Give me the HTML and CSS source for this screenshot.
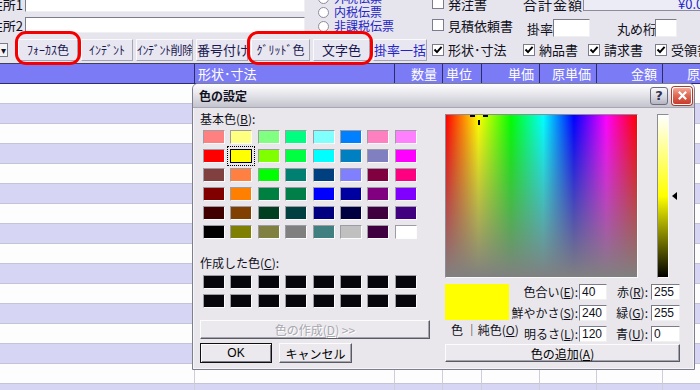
FILE: index.html
```html
<!DOCTYPE html>
<html lang="ja">
<head>
    <meta charset="UTF-8">
    <title>色の設定</title>
    <link rel="stylesheet" href="styles.css">
</head>
<body>
    <!-- Order form header -->
    <div class="top">
        <div class="addr">
            <div class="addr-row"><span class="lbl">住所1</span><span class="field addr-field"></span></div>
            <div class="addr-row"><span class="lbl">住所2</span><span class="field addr-field"></span></div>
        </div>
        <div class="radios">
            <div class="radio"><i></i>外税伝票</div>
            <div class="radio"><i></i>内税伝票</div>
            <div class="radio"><i></i>非課税伝票</div>
        </div>
        <div class="docs">
            <div class="check"><i></i>発注書</div>
            <div class="check"><i></i>見積依頼書</div>
        </div>
        <div class="totals">
            <div class="total-row"><span class="total-lbl">合計金額</span><span class="total">¥0.00</span></div>
            <div class="rate-row">
                <span class="rate-lbl">掛率</span><span class="field rate"></span>
                <span class="round-lbl">丸め桁</span><span class="field round"></span>
            </div>
        </div>
    </div>

    <!-- Toolbar -->
    <div class="toolbar">
        <span class="combo">▾</span>
        <button class="tb tb-focus">ﾌｫｰｶｽ色</button>
        <button class="tb tb-indent">ｲﾝﾃﾞﾝﾄ</button>
        <button class="tb tb-outdent">ｲﾝﾃﾞﾝﾄ削除</button>
        <button class="tb tb-number">番号付け</button>
        <button class="tb tb-grid">ｸﾞﾘｯﾄﾞ色</button>
        <button class="tb tb-text">文字色</button>
        <button class="tb tb-rate">掛率一括</button>
        <div class="tool-checks">
            <div class="check"><i><svg viewBox="0 0 10 10"><path d="M1.5 4.5l2.5 2.6 4.6-5.2"/></svg></i>形状･寸法</div>
            <div class="check"><i><svg viewBox="0 0 10 10"><path d="M1.5 4.5l2.5 2.6 4.6-5.2"/></svg></i>納品書</div>
            <div class="check"><i><svg viewBox="0 0 10 10"><path d="M1.5 4.5l2.5 2.6 4.6-5.2"/></svg></i>請求書</div>
            <div class="check"><i><svg viewBox="0 0 10 10"><path d="M1.5 4.5l2.5 2.6 4.6-5.2"/></svg></i>受領書</div>
        </div>
    </div>

    <!-- Detail grid -->
    <table class="grid">
        <colgroup>
            <col class="c-no"><col class="c-shape"><col class="c-qty"><col class="c-unit">
            <col class="c-price"><col class="c-cost"><col class="c-amount"><col class="c-rest">
        </colgroup>
        <thead>
            <tr><th></th><th class="left">形状･寸法</th><th>数量</th><th class="left">単位</th><th>単価</th><th>原単価</th><th>金額</th><th>原価金額</th></tr>
        </thead>
        <tbody>
            <tr><td></td><td></td><td></td><td></td><td></td><td></td><td></td><td></td></tr>
            <tr><td></td><td></td><td></td><td></td><td></td><td></td><td></td><td></td></tr>
            <tr><td></td><td></td><td></td><td></td><td></td><td></td><td></td><td></td></tr>
            <tr><td></td><td></td><td></td><td></td><td></td><td></td><td></td><td></td></tr>
            <tr><td></td><td></td><td></td><td></td><td></td><td></td><td></td><td></td></tr>
            <tr><td></td><td></td><td></td><td></td><td></td><td></td><td></td><td></td></tr>
            <tr><td></td><td></td><td></td><td></td><td></td><td></td><td></td><td></td></tr>
            <tr><td></td><td></td><td></td><td></td><td></td><td></td><td></td><td></td></tr>
            <tr><td></td><td></td><td></td><td></td><td></td><td></td><td></td><td></td></tr>
            <tr><td></td><td></td><td></td><td></td><td></td><td></td><td></td><td></td></tr>
            <tr><td></td><td></td><td></td><td></td><td></td><td></td><td></td><td></td></tr>
            <tr><td></td><td></td><td></td><td></td><td></td><td></td><td></td><td></td></tr>
            <tr><td></td><td></td><td></td><td></td><td></td><td></td><td></td><td></td></tr>
            <tr><td></td><td></td><td></td><td></td><td></td><td></td><td></td><td></td></tr>
            <tr><td></td><td></td><td></td><td></td><td></td><td></td><td></td><td></td></tr>
            <tr><td></td><td></td><td></td><td></td><td></td><td></td><td></td><td></td></tr>
        </tbody>
    </table>

    <!-- Annotation rings -->
    <div class="mark mark-focus"></div>
    <div class="mark mark-grid"></div>

    <!-- Color dialog -->
    <div class="dialog">
        <div class="title">
            <span class="title-text">色の設定</span>
            <span class="title-btn help">?</span>
            <span class="title-btn close"><svg viewBox="0 0 12 12"><path d="M2 2l8 8M10 2l-8 8"/></svg></span>
        </div>
        <div class="dlg-body">
            <div class="basic">
                <div class="cap">基本色(<u>B</u>):</div>
                <div class="swatches">
                    <span style="background:#ff8080"></span><span style="background:#ffff80"></span><span style="background:#80ff80"></span><span style="background:#00ff80"></span><span style="background:#80ffff"></span><span style="background:#0080ff"></span><span style="background:#ff80c0"></span><span style="background:#ff80ff"></span>
                    <span style="background:#ff0000"></span><span class="sel" style="background:#ffff00"></span><span style="background:#80ff00"></span><span style="background:#00ff40"></span><span style="background:#00ffff"></span><span style="background:#0080c0"></span><span style="background:#8080c0"></span><span style="background:#ff00ff"></span>
                    <span style="background:#804040"></span><span style="background:#ff8040"></span><span style="background:#00ff00"></span><span style="background:#008070"></span><span style="background:#004080"></span><span style="background:#8080ff"></span><span style="background:#800040"></span><span style="background:#ff0080"></span>
                    <span style="background:#800000"></span><span style="background:#ff8000"></span><span style="background:#008040"></span><span style="background:#008048"></span><span style="background:#0000ff"></span><span style="background:#0000a0"></span><span style="background:#800080"></span><span style="background:#8000ff"></span>
                    <span style="background:#400000"></span><span style="background:#804000"></span><span style="background:#004020"></span><span style="background:#004040"></span><span style="background:#000080"></span><span style="background:#000040"></span><span style="background:#400040"></span><span style="background:#400080"></span>
                    <span style="background:#000000"></span><span style="background:#808000"></span><span style="background:#808040"></span><span style="background:#808080"></span><span style="background:#408080"></span><span style="background:#c0c0c0"></span><span style="background:#400040"></span><span style="background:#ffffff"></span>
                </div>
                <div class="cap custom-cap">作成した色(<u>C</u>):</div>
                <div class="swatches custom">
                    <span></span><span></span><span></span><span></span><span></span><span></span><span></span><span></span>
                    <span></span><span></span><span></span><span></span><span></span><span></span><span></span><span></span>
                </div>
                <button class="btn define" disabled>色の作成(<u>D</u>) &gt;&gt;</button>
                <div class="actions">
                    <button class="btn ok">OK</button>
                    <button class="btn cancel">キャンセル</button>
                </div>
            </div>

            <div class="picker">
                <div class="spectrum-row">
                    <div class="spectrum">
                        <span class="cross cross-l"></span>
                        <span class="cross cross-r"></span>
                        <span class="cross cross-v"></span>
                    </div>
                    <div class="lum"></div>
                    <div class="lum-arrow"></div>
                </div>
                <div class="values">
                    <div class="preview-col">
                        <div class="preview"></div>
                        <div class="preview-lbl">色 ｜純色(<u>O</u>)</div>
                    </div>
                    <div class="fields">
                        <span class="f-lbl">色合い(<u>E</u>):</span><span class="field f-in">40</span>
                        <span class="f-lbl f-lbl2">赤(<u>R</u>):</span><span class="field f-in">255</span>
                        <span class="f-lbl">鮮やかさ(<u>S</u>):</span><span class="field f-in">240</span>
                        <span class="f-lbl f-lbl2">緑(<u>G</u>):</span><span class="field f-in">255</span>
                        <span class="f-lbl">明るさ(<u>L</u>):</span><span class="field f-in">120</span>
                        <span class="f-lbl f-lbl2">青(<u>U</u>):</span><span class="field f-in">0</span>
                    </div>
                </div>
                <button class="btn add">色の追加(<u>A</u>)</button>
            </div>
        </div>
    </div>
</body>
</html>
```

FILE: styles.css
```css
body {
    margin: 0;
    width: 700px;
    height: 390px;
    overflow: hidden;
    position: relative;
    background: #e6e4ec;
    color: #101020;
    font-family: "Noto Sans CJK JP", sans-serif;
    font-size: 12px;
    line-height: 1;
}

u {
    text-decoration: underline;
    text-underline-offset: 1px;
}

/* Header form */
.top {
    display: flex;
    height: 36px;
}

.top > div {
    flex: none;
}

.field {
    display: block;
    box-sizing: border-box;
    background: #fff;
    border: 1px solid;
    border-color: #7c7c88 #f0f0f0 #f0f0f0 #7c7c88;
}

.addr {
    width: 312px;
    margin-top: -4px;
    display: flex;
    flex-direction: column;
    gap: 5px;
}

.addr-row {
    display: flex;
    align-items: center;
    height: 16px;
}

.lbl {
    width: 23px;
    margin-right: 2px;
    display: flex;
    justify-content: flex-end;
    overflow: hidden;
    white-space: nowrap;
    font-size: 13px;
}

.addr-field {
    width: 280px;
    height: 16px;
}

.radios {
    width: 112px;
    margin-top: -8px;
    padding-left: 6px;
    display: flex;
    flex-direction: column;
    gap: 2px;
}

.radio {
    display: flex;
    align-items: center;
    gap: 5px;
    height: 12px;
    line-height: 12px;
    color: #2424c8;
    font-size: 12px;
    white-space: nowrap;
}

.radio i {
    flex: none;
    width: 11px;
    height: 11px;
    box-sizing: border-box;
    border-radius: 50%;
    background: #fff;
    border: 1px solid #8c8c9c;
}

.docs {
    width: 88px;
    padding-left: 2px;
    margin-top: -3px;
    display: flex;
    flex-direction: column;
    gap: 10px;
}

.check {
    display: flex;
    align-items: center;
    gap: 4px;
    height: 12px;
    white-space: nowrap;
    font-size: 13px;
}

.check i {
    flex: none;
    width: 12px;
    height: 12px;
    box-sizing: border-box;
    background: #fff;
    border: 1px solid #7c7c8c;
    display: flex;
    align-items: center;
    justify-content: center;
}

.check svg {
    width: 10px;
    height: 10px;
    fill: none;
    stroke: #000;
    stroke-width: 2;
}

.totals {
    width: 180px;
    display: flex;
    flex-direction: column;
}

.total-row {
    display: flex;
    align-items: center;
    height: 15px;
    margin-top: -4px;
}

.total-lbl {
    flex: none;
    width: 60px;
    padding-left: 3px;
    font-size: 14px;
    letter-spacing: 1px;
    white-space: nowrap;
}

.total {
    flex: none;
    width: 140px;
    height: 15px;
    box-sizing: border-box;
    padding-left: 94px;
    background: #ececf6;
    border: 1px solid #8c8c9c;
    color: #2424c8;
    font-size: 13px;
    line-height: 13px;
    white-space: nowrap;
}

.rate-row {
    display: flex;
    align-items: center;
    height: 18px;
    margin-top: 8px;
}

.rate-row > * {
    flex: none;
}

.rate-lbl {
    padding-left: 7px;
    width: 26px;
    font-size: 13px;
    white-space: nowrap;
}

.rate {
    width: 37px;
    height: 18px;
}

.round-lbl {
    margin-left: 27px;
    width: 38px;
    font-size: 13px;
    white-space: nowrap;
}

.round {
    width: 22px;
    height: 18px;
}

/* Toolbar */
.toolbar {
    display: flex;
    align-items: center;
    gap: 3px;
    height: 27px;
}

.toolbar > * {
    flex: none;
}

.combo {
    width: 8px;
    height: 14px;
    margin-right: 7px;
    box-sizing: border-box;
    border: 1px solid #7c7c88;
    border-left: none;
    background: #f4f4f8;
    font-size: 10px;
    line-height: 12px;
    text-align: center;
    overflow: hidden;
}

.tb {
    height: 22px;
    padding: 0;
    box-sizing: border-box;
    background: #e8e6f0;
    border: 1px solid;
    border-color: #fafafa #a4a4b4 #a4a4b4 #fafafa;
    color: #1a1a50;
    font-family: inherit;
    font-size: 12px;
    white-space: nowrap;
    overflow: hidden;
}

.tb-focus { width: 60px; }
.tb-indent { width: 52px; }
.tb-outdent { width: 57px; letter-spacing: -0.5px; }
.tb-number { width: 52px; font-size: 13px; }
.tb-grid { width: 59px; }
.tb-text { width: 57px; font-size: 13px; }
.tb-rate { width: 54px; color: #2424c8; font-size: 13px; }

.tool-checks {
    display: grid;
    grid-template-columns: 91px 65px 67px auto;
    margin-left: 2px;
}

/* Detail grid */
.grid {
    border-collapse: separate;
    border-spacing: 0;
    table-layout: fixed;
    width: 745px;
    border-top: 1px solid #404058;
}

.c-no { width: 195px; }
.c-shape { width: 200px; }
.c-qty { width: 48px; }
.c-unit { width: 39px; }
.c-price { width: 58px; }
.c-cost { width: 57px; }
.c-amount { width: 66px; }
.c-rest { width: 82px; }

.grid th {
    height: 20px;
    padding: 0 5px 0 0;
    box-sizing: border-box;
    background: #7b7bf6;
    color: #fff;
    font-weight: normal;
    font-size: 13px;
    text-align: right;
    border-right: 1px solid #2c2c6a;
    border-bottom: 1px solid #2c2c6a;
    white-space: nowrap;
    overflow: hidden;
}

.grid th.left {
    text-align: left;
    padding: 0 0 0 3px;
}

.grid td {
    height: 20px;
    padding: 0;
    box-sizing: border-box;
    background: #fdfdfd;
    border-right: 1px solid #cdcddc;
    border-bottom: 1px solid #c4c4d8;
}

.grid tbody tr:nth-child(even) td {
    background: #d6d6f4;
}

/* Red annotation rings */
.mark {
    position: absolute;
    box-sizing: border-box;
    border: 3px solid #f40000;
    border-radius: 11px;
}

.mark-focus {
    left: 15px;
    top: 31px;
    width: 66px;
    height: 34px;
}

.mark-grid {
    left: 247px;
    top: 31px;
    width: 126px;
    height: 34px;
}

/* Color dialog */
.dialog {
    position: absolute;
    left: 192px;
    top: 83px;
    width: 503px;
    height: 287px;
    box-sizing: border-box;
    background: #e9e7eb;
    border: 1px solid #7e7e8e;
    border-radius: 6px 6px 0 0;
    box-shadow: inset 0 0 0 1px #f6f6f8;
    display: flex;
    flex-direction: column;
}

.title {
    height: 23px;
    display: flex;
    align-items: center;
    padding: 0 2px 0 6px;
    border-radius: 5px 5px 0 0;
    background: linear-gradient(#ffffff, #eeeef2 30%, #d6d6de 70%, #c4c4ce);
    border-bottom: 1px solid #a8a8b4;
}

.title-text {
    font-weight: bold;
    font-size: 12px;
    flex: 1;
}

.title-btn {
    width: 18px;
    height: 18px;
    box-sizing: border-box;
    border-radius: 3px;
    display: flex;
    align-items: center;
    justify-content: center;
}

.help {
    margin-right: 4px;
    background: linear-gradient(#fafafc, #d4d4de 60%, #b4b4c2);
    border: 1px solid #6c6c7c;
    color: #30304a;
    font-family: "DejaVu Sans", sans-serif;
    font-weight: bold;
    font-size: 13px;
}

.close {
    width: 20px;
    background: linear-gradient(#f4a898, #e06a56 45%, #c83c2c);
    border: 1px solid #fdfdfd;
    box-shadow: 0 0 0 1px #a04030;
}

.close svg {
    width: 11px;
    height: 11px;
    stroke: #fff;
    stroke-width: 2.4;
}

.dlg-body {
    flex: 1;
    display: flex;
    gap: 13px;
    padding: 4px 0 0 7px;
}

.basic {
    width: 232px;
    display: flex;
    flex-direction: column;
}

.cap {
    height: 14px;
    line-height: 14px;
}

.swatches {
    display: grid;
    grid-template-columns: repeat(8, 22px);
    grid-auto-rows: 14px;
    column-gap: 5.4px;
    row-gap: 5px;
    margin: 4px 0 0 3px;
}

.swatches span {
    box-sizing: border-box;
    border: 1px solid;
    border-color: #9c9ca4 #fcfcfc #fcfcfc #9c9ca4;
}

.swatches .sel {
    border-color: #000;
    outline: 1px dotted #000;
    outline-offset: 2px;
}

.custom-cap {
    margin-top: 17px;
}

.custom {
    margin-top: 5px;
}

.custom span {
    background: #06060c;
}

.btn {
    box-sizing: border-box;
    padding: 0;
    background: #ebe9ed;
    border: 1px solid;
    border-color: #fcfcfc #5a5a64 #5a5a64 #fcfcfc;
    box-shadow: inset -1px -1px 0 #a4a4ae;
    color: #000;
    font-family: inherit;
    font-size: 12px;
}

.define {
    width: 230px;
    height: 19px;
    margin-top: 12px;
    color: #a8a8b0;
    text-shadow: 1px 1px 0 #fff;
}

.actions {
    display: flex;
    gap: 7px;
    margin-top: 4px;
}

.ok {
    width: 72px;
    height: 20px;
    border-color: #101010;
    box-shadow: inset 1px 1px 0 #fcfcfc, inset -1px -1px 0 #7c7c88;
    font-family: "Liberation Sans", sans-serif;
}

.cancel {
    width: 73px;
    height: 20px;
}

.picker {
    width: 236px;
    display: flex;
    flex-direction: column;
    padding-top: 2px;
}

.spectrum-row {
    display: flex;
    height: 164px;
}

.spectrum {
    position: relative;
    width: 193px;
    height: 164px;
    box-sizing: border-box;
    border: 1px solid;
    border-color: #8c8c96 #fafafa #fafafa #8c8c96;
    background:
        linear-gradient(to bottom, rgba(128, 128, 128, 0), #808080),
        linear-gradient(to right, #f00, #ff0 17%, #0f0 34%, #0ff 51%, #00f 67%, #f0f 84%, #f00);
}

.cross {
    position: absolute;
    background: #000;
}

.cross-l { left: 24px; top: 0; width: 5px; height: 2px; }
.cross-r { left: 37px; top: 0; width: 5px; height: 2px; }
.cross-v { left: 32px; top: 5px; width: 2px; height: 5px; }

.lum {
    width: 12px;
    margin-left: 19px;
    box-sizing: border-box;
    border: 1px solid;
    border-color: #8c8c96 #fafafa #fafafa #8c8c96;
    background: linear-gradient(#fff, #ff0 50%, #000);
}

.lum-arrow {
    align-self: center;
    margin-left: 3px;
    width: 0;
    height: 0;
    border-top: 4px solid transparent;
    border-bottom: 4px solid transparent;
    border-right: 5px solid #000;
}

.values {
    display: flex;
    margin-top: 6px;
}

.preview-col {
    width: 64px;
}

.preview {
    height: 36px;
    background: #ffff00;
}

.preview-lbl {
    margin-top: 4px;
    padding-left: 6px;
    white-space: nowrap;
    font-size: 12px;
}

.fields {
    display: grid;
    grid-template-columns: 70px 28px 44px 29px;
    grid-auto-rows: 16px;
    row-gap: 5px;
}

.f-lbl {
    text-align: right;
    line-height: 16px;
    white-space: nowrap;
    padding-right: 1px;
}

.f-lbl2 {
    padding-right: 3px;
}

.f-in {
    height: 16px;
    padding-left: 2px;
    line-height: 14px;
    font-family: "Liberation Sans", sans-serif;
    font-size: 12px;
}

.add {
    width: 235px;
    height: 18px;
    margin-top: 2px;
}
```
